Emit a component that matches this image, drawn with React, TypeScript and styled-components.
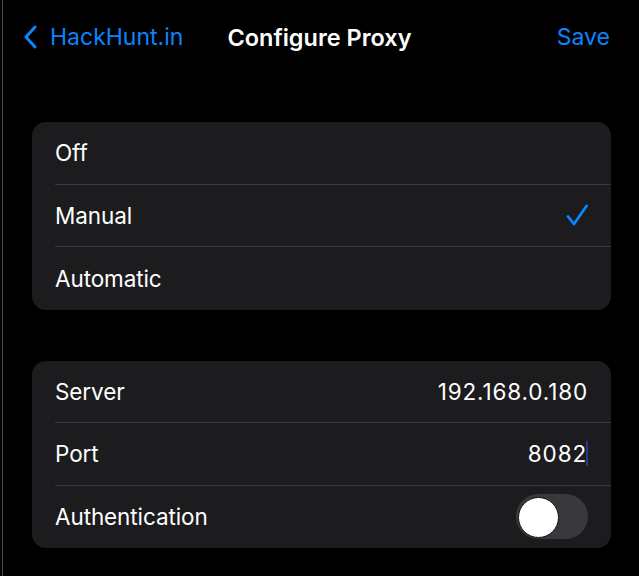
import React from 'react';
import styled, { createGlobalStyle } from 'styled-components';

const GlobalStyle = createGlobalStyle`
  html, body {
    margin: 0;
    padding: 0;
    background-color: #000000;
  }
  body {
    font-family: Inter, 'Noto Sans', 'Liberation Sans', sans-serif;
    color: #ffffff;
  }
`;

const Screen = styled.div`
  margin-left: 2px;
  border-left: 1px solid #4a4a4a;
  min-height: 576px;
  box-sizing: border-box;
  background-color: #000000;
`;

const NavBar = styled.div`
  display: grid;
  grid-template-columns: 1fr auto 1fr;
  align-items: center;
  height: 74px;
  padding: 0 29px 0 20px;
`;

const BackLink = styled.div`
  display: flex;
  align-items: center;
  gap: 13px;
  color: #0a84ff;
  font-size: 23px;
  cursor: pointer;
`;

const Title = styled.div`
  font-size: 23.5px;
  font-weight: 600;
  letter-spacing: 0;
  margin-left: 6px;
`;

const SaveBtn = styled.div`
  justify-self: end;
  color: #0a84ff;
  font-size: 23px;
  cursor: pointer;
`;

const Content = styled.div`
  display: flex;
  flex-direction: column;
  gap: 51px;
  padding: 48px 28px 0 29px;
`;

const Card = styled.div`
  background-color: #1c1c1e;
  border-radius: 14px;
  overflow: hidden;
`;

const Row = styled.div<{ $last?: boolean }>`
  display: flex;
  align-items: center;
  justify-content: space-between;
  height: 62.5px;
  margin-left: 23px;
  padding-right: 23px;
  box-sizing: border-box;
  border-bottom: ${(p) => (p.$last ? 'none' : '1px solid #38383a')};
  font-size: 22.5px;
  letter-spacing: -0.1px;
`;

const Value = styled.div`
  display: flex;
  align-items: center;
  color: #ffffff;
  letter-spacing: 0.85px;
`;

const Caret = styled.span`
  display: inline-block;
  width: 2px;
  height: 25px;
  margin-left: -1px;
  background-color: #1f3d8f;
`;

const Toggle = styled.div<{ $on?: boolean }>`
  position: relative;
  width: 72px;
  height: 45px;
  border-radius: 23px;
  background-color: ${(p) => (p.$on ? '#30d158' : '#39393d')};
  cursor: pointer;
`;

const Knob = styled.div`
  position: absolute;
  top: 3px;
  left: 2px;
  width: 39px;
  height: 39px;
  border-radius: 50%;
  background-color: #ffffff;
  border: 1px solid #111;
`;

function Chevron() {
  return (
    <svg width="14" height="24" viewBox="0 0 14 24" fill="none">
      <path d="M12 2 L3 12 L12 22" stroke="#0a84ff" strokeWidth="3" strokeLinecap="round" strokeLinejoin="round" />
    </svg>
  );
}

function Check() {
  return (
    <svg width="22" height="22" viewBox="0 0 22 22" fill="none">
      <path d="M2 12.5 L8 20 L20.5 2" stroke="#0a84ff" strokeWidth="2.8" strokeLinecap="round" strokeLinejoin="round" />
    </svg>
  );
}

const modes = ['Off', 'Manual', 'Automatic'];

function App() {
  const [mode, setMode] = React.useState('Manual');
  const [auth, setAuth] = React.useState(false);

  return (
    <Screen>
      <GlobalStyle />
      <NavBar>
        <BackLink>
          <Chevron />
          HackHunt.in
        </BackLink>
        <Title>Configure Proxy</Title>
        <SaveBtn>Save</SaveBtn>
      </NavBar>
      <Content>
        <Card>
          {modes.map((m, i) => (
            <Row key={m} $last={i === modes.length - 1} onClick={() => setMode(m)}>
              {m}
              {mode === m && <Check />}
            </Row>
          ))}
        </Card>
        <Card>
          <Row>
            Server
            <Value>192.168.0.180</Value>
          </Row>
          <Row>
            Port
            <Value>
              8082
              <Caret />
            </Value>
          </Row>
          <Row $last>
            Authentication
            <Toggle $on={auth} onClick={() => setAuth(!auth)}>
              <Knob />
            </Toggle>
          </Row>
        </Card>
      </Content>
    </Screen>
  );
}

export default App;
